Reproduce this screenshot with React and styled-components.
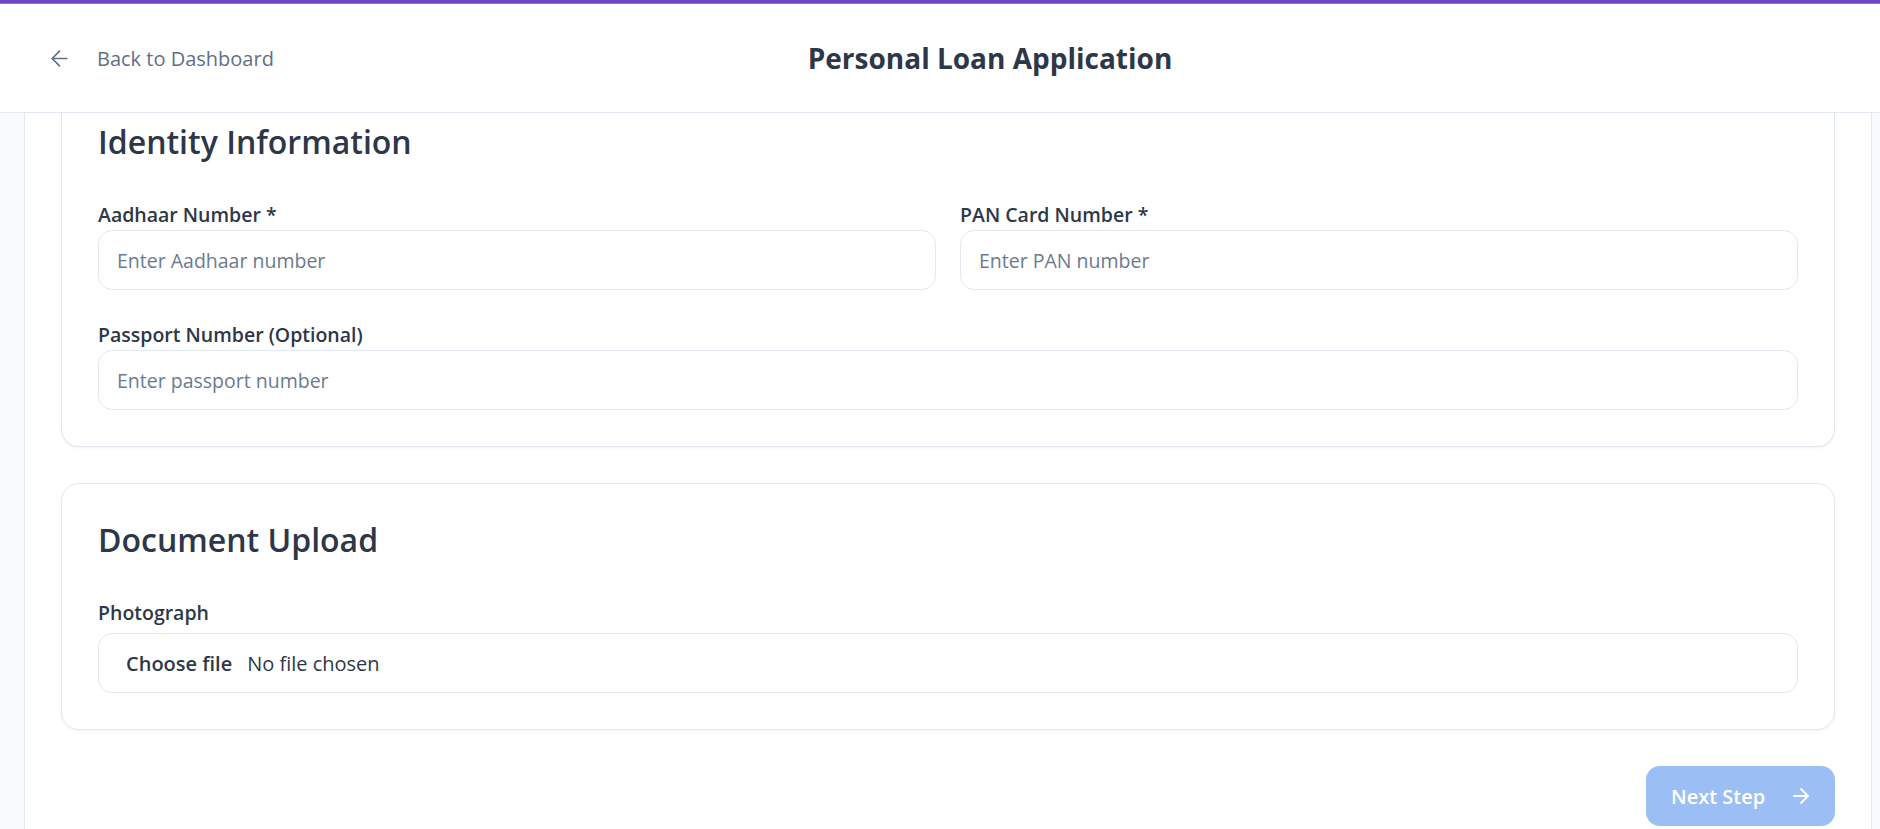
import React from "react"
import styled, { createGlobalStyle } from "styled-components"
import { ArrowLeft, ArrowRight } from "lucide-react"

const GlobalStyle = createGlobalStyle`
    html, body {
        margin: 0;
        padding: 0;
        height: 100%;
        overflow: hidden;
    }
    body {
        background: #f8fafc;
        font-family: "Open Sans", "Noto Sans", sans-serif;
        color: #2d3748;
    }
    * {
        box-sizing: border-box;
    }
`

export default function App(){
    return(
    <Page>
        <GlobalStyle/>
        <TopStripe/>
        <Header>
            <BackLink href="#">
                <ArrowLeft size={25} strokeWidth={1.6}/>
                <span>Back to Dashboard</span>
            </BackLink>
            <Title>Personal Loan Application</Title>
            <HeaderSpacer/>
        </Header>

        <Main>
            <ScrolledCard>
                <SectionTitle>Identity Information</SectionTitle>
                <FieldGrid>
                    <Field>
                        <Label>Aadhaar Number *</Label>
                        <Input placeholder="Enter Aadhaar number"/>
                    </Field>
                    <Field>
                        <Label>PAN Card Number *</Label>
                        <Input placeholder="Enter PAN number"/>
                    </Field>
                    <Field $wide>
                        <Label>Passport Number (Optional)</Label>
                        <Input placeholder="Enter passport number"/>
                    </Field>
                </FieldGrid>
            </ScrolledCard>

            <Card>
                <SectionTitle>Document Upload</SectionTitle>
                <Field $gap={6}>
                    <Label>Photograph</Label>
                    <FileBox>
                        <FileButton>Choose file</FileButton>
                        <FileStatus>No file chosen</FileStatus>
                    </FileBox>
                </Field>
            </Card>

            <Actions>
                <NextButton disabled>
                    <span>Next Step</span>
                    <ArrowRight size={24} strokeWidth={1.8}/>
                </NextButton>
            </Actions>
        </Main>
    </Page>
)
}

const Page = styled.div`
    height: 829px;
    display: flex;
    flex-direction: column;
    overflow: hidden;
`

const TopStripe = styled.div`
    height: 4px;
    flex-shrink: 0;
    background: #6b46c1;
    border-bottom: 1px solid #8d70d4;
`

const Header = styled.header`
    height: 109px;
    flex-shrink: 0;
    display: flex;
    align-items: center;
    padding: 0 0 0 47px;
    background: #ffffff;
    border-bottom: 1px solid #e2e8f0;
`

const BackLink = styled.a`
    width: 229px;
    display: flex;
    align-items: center;
    gap: 25px;
    color: #5f6f86;
    text-decoration: none;
    font-size: 20px;
    font-weight: 500;

    svg {
        flex-shrink: 0;
    }
`

const Title = styled.h1`
    flex: 1;
    margin: 0;
    text-align: center;
    font-size: 28px;
    font-weight: 700;
    color: #2d3748;
`

const HeaderSpacer = styled.div`
    width: 176px;
`

const Main = styled.main`
    flex: 1;
    display: flex;
    flex-direction: column;
    gap: 36px;
    margin: 0 8px 0 24px;
    padding: 0 36px;
    background: #ffffff;
    border-left: 1px solid #e2e8f0;
    border-right: 1px solid #e2e8f0;
    overflow: hidden;
`

const Card = styled.section`
    flex-shrink: 0;
    background: #ffffff;
    border: 1px solid #e2e8f0;
    border-radius: 18px;
    box-shadow: 0 1px 3px rgba(15, 23, 42, 0.05);
    padding: 36px;
`

const ScrolledCard = styled(Card)`
    border-top: none;
    border-top-left-radius: 0;
    border-top-right-radius: 0;
    padding-top: 9px;
`

const SectionTitle = styled.h2`
    margin: 0 0 39px 0;
    font-size: 32px;
    line-height: 40px;
    font-weight: 600;
    color: #2d3748;
`

const FieldGrid = styled.div`
    display: grid;
    grid-template-columns: 1fr 1fr;
    column-gap: 24px;
    row-gap: 31px;
`

const Field = styled.div`
    display: flex;
    flex-direction: column;
    gap: ${props => props.$gap || 1}px;
    grid-column: ${props => props.$wide ? "1 / -1" : "auto"};
`

const Label = styled.label`
    font-size: 19.5px;
    line-height: 28px;
    font-weight: 600;
    color: #2d3748;
`

const Input = styled.input`
    height: 60px;
    width: 100%;
    padding: 0 18px;
    border: 1px solid #e2e8f0;
    border-radius: 14px;
    font-family: "Open Sans", "Noto Sans", sans-serif;
    font-size: 19.5px;
    color: #2d3748;
    background: #ffffff;
    outline: none;

    &::placeholder {
        color: #6b7a90;
    }
`

const FileBox = styled.div`
    height: 60px;
    display: flex;
    align-items: center;
    gap: 15px;
    padding: 0 27px;
    border: 1px solid #e2e8f0;
    border-radius: 14px;
    font-size: 20px;
`

const FileButton = styled.span`
    font-weight: 600;
    color: #2d3748;
`

const FileStatus = styled.span`
    color: #2d3748;
`

const Actions = styled.div`
    display: flex;
    justify-content: flex-end;
`

const NextButton = styled.button`
    width: 189px;
    height: 60px;
    display: flex;
    align-items: center;
    gap: 24px;
    padding: 0 0 0 25px;
    border: none;
    border-radius: 14px;
    background: #9bbff5;
    color: #ffffff;
    font-family: "Open Sans", "Noto Sans", sans-serif;
    font-size: 20px;
    font-weight: 600;
`
